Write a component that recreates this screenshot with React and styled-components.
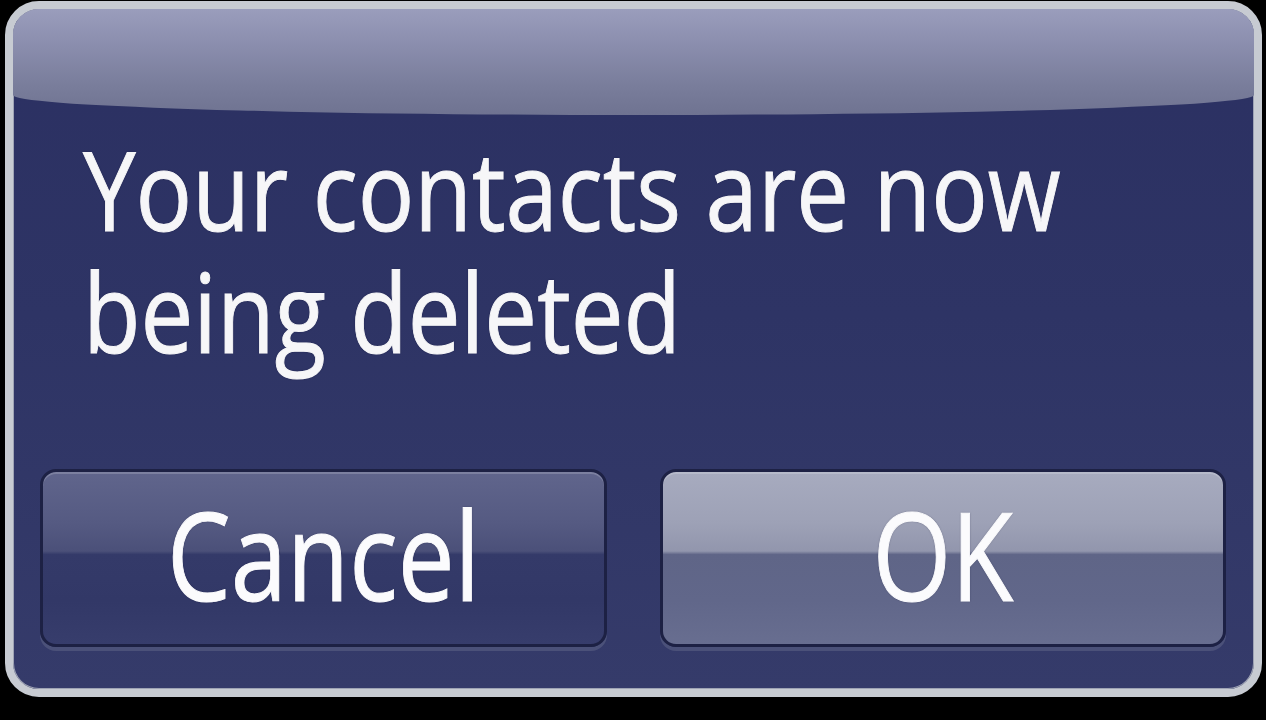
import React from 'react';
import styled, { createGlobalStyle, css } from 'styled-components';

const Global = createGlobalStyle`
    html, body {
        margin: 0;
        padding: 0;
        background: #000;
        width: 1266px;
        height: 720px;
        overflow: hidden;
    }
    body {
        font-family: 'Open Sans', 'Noto Sans', sans-serif;
    }
`;

// Outer alert frame with the pale rim
const Dialog = styled.div`
    box-sizing: border-box;
    width: 1257px;
    height: 696px;
    margin: 1px 0 0 5px;
    border: 8px solid #c7cbd2;
    border-radius: 34px;
    overflow: hidden;
    display: flex;
    flex-direction: column;
    background: linear-gradient(180deg, #2b3062 0%, #2e3465 45%, #353b6a 100%);
    box-shadow: inset 0 0 0 1px #9ea3b4;
`;

// Glossy title band, dipping a little in the middle
const Gloss = styled.div`
    flex: 0 0 auto;
    height: 106px;
    background: linear-gradient(180deg, #9a9dbc 0%, #8a8dad 35%, #7a7e9c 70%, #6f7391 100%);
    border-radius: 0 0 50% 50% / 0 0 20px 20px;
`;

const Message = styled.div`
    margin: 12px 0 0 70px;
    color: #f6f6f8;
    font-size: 110px;
    transform: scaleX(0.855);
    transform-origin: left top;
    white-space: nowrap;
    -webkit-text-stroke: 1px #f6f6f8;
    text-shadow: 0 0 2px rgba(10, 12, 40, 0.6);
`;

const Line = styled.div`
    height: 122px;
    line-height: 122px;
`;

const Buttons = styled.div`
    display: grid;
    grid-template-columns: 567px 566px;
    column-gap: 53px;
    margin: 98px 0 0 27px;
`;

const tones = {
    plain: css`
        background: linear-gradient(180deg,
            #60658c 0%, #555a82 30%, #4b5079 46%,
            #343a69 48%, #323867 75%, #373d6c 100%);
    `,
    primary: css`
        background: linear-gradient(180deg,
            #a7abbf 0%, #9da1b6 30%, #9296ad 46%,
            #5f6587 48%, #61678a 75%, #686e90 100%);
    `,
};

const Button = styled.button`
    box-sizing: border-box;
    height: 178px;
    border: 3px solid #1d2144;
    border-radius: 16px;
    padding: 0;
    display: flex;
    align-items: center;
    justify-content: center;
    color: #fbfbfd;
    font-family: 'Open Sans', 'Noto Sans', sans-serif;
    font-size: 122px;
    line-height: 1;
    cursor: pointer;
    box-shadow: inset 0 2px 0 rgba(255, 255, 255, 0.18), 0 4px 0 #4b5179;
    ${({ tone }) => tones[tone]}
`;

const Label = styled.span`
    display: inline-block;
    transform: scaleX(0.83);
    margin-top: -8px;
    -webkit-text-stroke: 1px #fbfbfd;
    text-shadow: 0 0 2px rgba(10, 12, 40, 0.5);
`;

export default function App() {
    return (
        <>
            <Global />
            <Dialog role="alertdialog">
                <Gloss />
                <Message>
                    <Line>Your contacts are now</Line>
                    <Line>being deleted</Line>
                </Message>
                <Buttons>
                    <Button tone="plain"><Label>Cancel</Label></Button>
                    <Button tone="primary"><Label>OK</Label></Button>
                </Buttons>
            </Dialog>
        </>
    );
}
